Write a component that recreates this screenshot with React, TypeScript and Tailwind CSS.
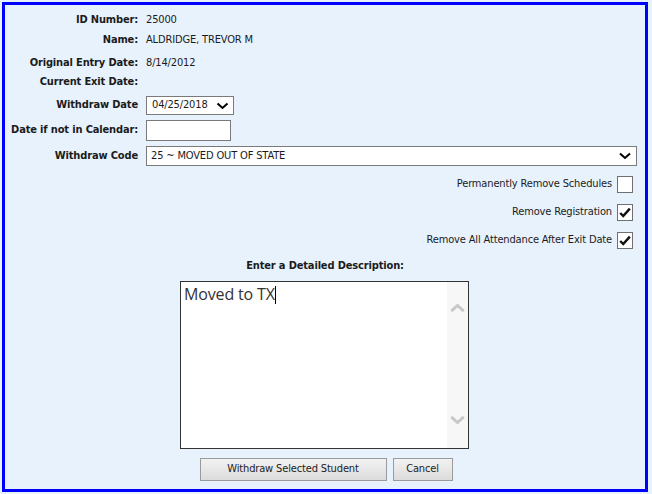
const font = "font-['Tahoma','DejaVu_Sans_Condensed','DejaVu_Sans',sans-serif]";

const Chevron = ({ className = '', width = 2 }: { className?: string; width?: number }) => (
  <svg viewBox="0 0 12 8" className={className} fill="none" stroke="currentColor" strokeWidth={width}>
    <path d="M1 1.5 L6 6 L11 1.5" />
  </svg>
);

const Check = () => (
  <svg viewBox="0 0 16 16" className="w-[16px] h-[16px]" fill="none" stroke="#111" strokeWidth="2.8">
    <path d="M2.5 8 L6 11.5 L13.5 3" />
  </svg>
);

function InfoRow({ label, value, h, mt = '' }: { label: string; value?: string; h: string; mt?: string }) {
  return (
    <div className={`flex items-center ${h} ${mt}`}>
      <div className="w-[133px] text-right font-bold">{label}</div>
      <div className="ml-[8px]">{value}</div>
    </div>
  );
}

function CheckRow({ label, checked }: { label: string; checked: boolean }) {
  return (
    <div className="flex items-center justify-end h-[17px] pr-[12px]">
      <span className="mr-[5px]">{label}</span>
      <div className="w-[16px] h-[17px] border border-[#707070] bg-white flex items-center justify-center">
        {checked && <Check />}
      </div>
    </div>
  );
}

export default function App() {
  return (
    <div className={`w-[652px] h-[494px] bg-[#e8f2fd] pt-[2px] pl-[2px] ${font} text-[11px] tracking-[-0.15px] text-[#1b1b1b]`}>
      <div className="w-[646px] h-[490px] border-[3px] border-[#0000ff] bg-[#e8f2fd] pt-[5px]">
        <InfoRow label="ID Number:" value="25000" h="h-[20px]" />
        <InfoRow label="Name:" value="ALDRIDGE, TREVOR M" h="h-[20px]" />
        <InfoRow label="Original Entry Date:" value="8/14/2012" h="h-[18px]" mt="mt-[4px]" />
        <InfoRow label="Current Exit Date:" h="h-[20px]" />

        {/* Withdraw date */}
        <div className="flex items-center h-[19px] mt-[4px]">
          <div className="w-[133px] text-right font-bold">Withdraw Date</div>
          <div className="ml-[8px] w-[88px] h-[19px] border border-[#7a7a7a] bg-white flex items-center pl-[5px] pr-[4px]">
            <span className="flex-1">04/25/2018</span>
            <Chevron className="w-[13px] h-[8px] text-black" />
          </div>
        </div>

        <div className="flex items-center h-[21px] mt-[5px]">
          <div className="w-[133px] text-right font-bold">Date if not in Calendar:</div>
          <div className="ml-[8px] w-[85px] h-[21px] border border-[#7a7a7a] bg-white" />
        </div>

        <div className="flex items-center h-[20px] mt-[5px]">
          <div className="w-[133px] text-right font-bold">Withdraw Code</div>
          <div className="ml-[8px] w-[491px] h-[20px] border border-[#7a7a7a] bg-white flex items-center pl-[4px] pr-[5px]">
            <span className="flex-1">25 ~ MOVED OUT OF STATE</span>
            <Chevron className="w-[12px] h-[8px] text-black" />
          </div>
        </div>

        <div className="mt-[10px] flex flex-col gap-[11px]">
          <CheckRow label="Permanently Remove Schedules" checked={false} />
          <CheckRow label="Remove Registration" checked />
          <CheckRow label="Remove All Attendance After Exit Date" checked />
        </div>

        <div className="mt-[9px] text-center font-bold">Enter a Detailed Description:</div>

        {/* Description box */}
        <div className="mt-[6px] ml-[175px] w-[289px] h-[168px] border border-[#333] bg-white flex">
          <div className="flex-1 pl-[3px] pt-[1px] font-['Open_Sans',sans-serif] text-[16px] text-[#333] leading-[22px]">
            Moved to TX<span className="inline-block w-px h-[18px] bg-black align-middle" />
          </div>
          <div className="w-[21px] bg-[#f7f7f7] flex flex-col items-center justify-between pt-[21px] pb-[23px] text-[#c8c8c8]">
            <Chevron className="w-[15px] h-[10px] rotate-180" width={2.4} />
            <Chevron className="w-[15px] h-[10px]" width={2.4} />
          </div>
        </div>

        <div className="mt-[9px] flex justify-center gap-[6px] pl-[2px]">
          <button className="w-[187px] h-[23px] border border-[#9a9a9a] bg-gradient-to-b from-[#f2f2f2] to-[#dcdcdc] text-[#222]">
            Withdraw Selected Student
          </button>
          <button className="w-[60px] h-[23px] border border-[#9a9a9a] bg-gradient-to-b from-[#f2f2f2] to-[#dcdcdc] text-[#222]">
            Cancel
          </button>
        </div>
      </div>
    </div>
  );
}
